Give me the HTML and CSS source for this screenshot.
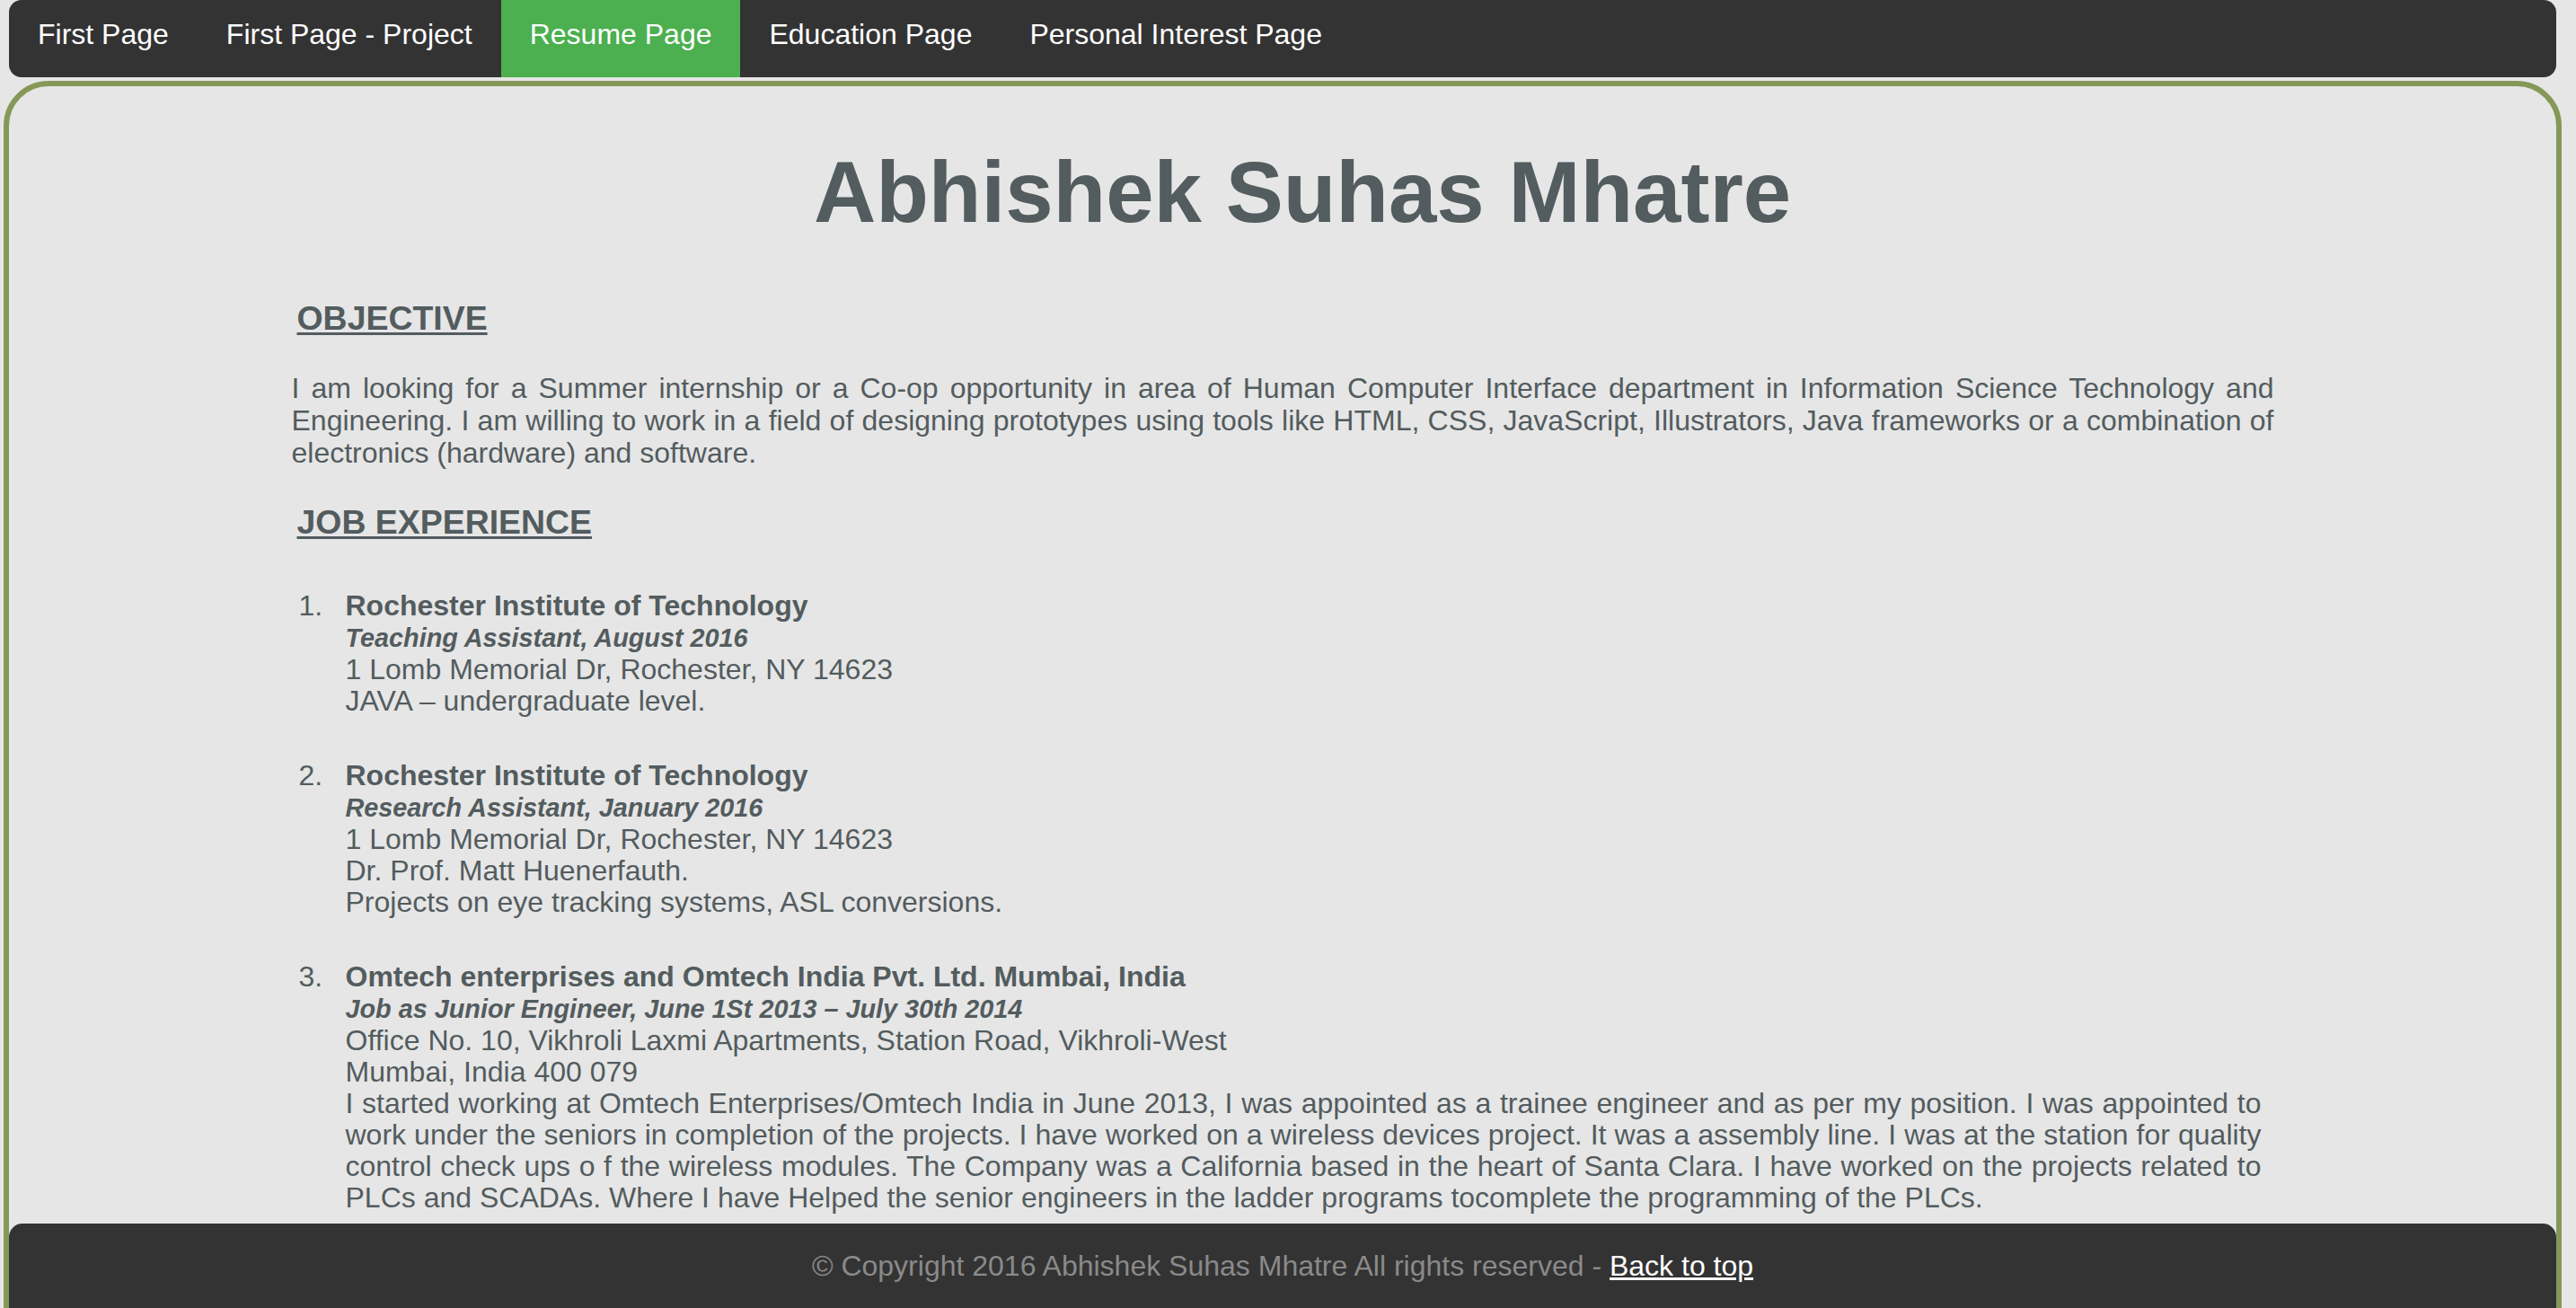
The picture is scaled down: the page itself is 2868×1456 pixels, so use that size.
FILE: index.html
```html
<!DOCTYPE html>
<html lang="en">
<head>
<meta charset="utf-8">
<title>Resume - Abhishek Suhas Mhatre</title>
<link rel="stylesheet" href="styles.css">
</head>
<body>
<div class="page" id="top">
  <nav class="topnav">
    <ul class="nav-list">
      <li><a class="nav-link" href="#">First Page</a></li>
      <li><a class="nav-link" href="#">First Page - Project</a></li>
      <li><a class="nav-link active" href="#">Resume Page</a></li>
      <li><a class="nav-link" href="#">Education Page</a></li>
      <li><a class="nav-link" href="#">Personal Interest Page</a></li>
    </ul>
  </nav>
  <main class="sheet">
    <div class="column">
      <h1 class="name">Abhishek Suhas Mhatre</h1>
      <h3 class="section">OBJECTIVE</h3>
      <p class="objective">I am looking for a Summer internship or a Co-op opportunity in area of Human Computer Interface department in Information Science Technology and Engineering. I am willing to work in a field of designing prototypes using tools like HTML, CSS, JavaScript, Illustrators, Java frameworks or a combination of electronics (hardware) and software.</p>
      <h3 class="section">JOB EXPERIENCE</h3>
      <ol class="jobs">
        <li class="job">
          <div class="job-body">
            <span class="job-title">Rochester Institute of Technology</span><br>
            <span class="job-role">Teaching Assistant, August 2016</span><br>
            1 Lomb Memorial Dr, Rochester, NY 14623<br>
            JAVA – undergraduate level.
          </div>
        </li>
        <li class="job">
          <div class="job-body">
            <span class="job-title">Rochester Institute of Technology</span><br>
            <span class="job-role">Research Assistant, January 2016</span><br>
            1 Lomb Memorial Dr, Rochester, NY 14623<br>
            Dr. Prof. Matt Huenerfauth.<br>
            Projects on eye tracking systems, ASL conversions.
          </div>
        </li>
        <li class="job">
          <div class="job-body">
            <span class="job-title">Omtech enterprises and Omtech India Pvt. Ltd. Mumbai, India</span><br>
            <span class="job-role">Job as Junior Engineer, June 1St 2013 – July 30th 2014</span><br>
            Office No. 10, Vikhroli Laxmi Apartments, Station Road, Vikhroli-West<br>
            Mumbai, India 400 079<br>
            I started working at Omtech Enterprises/Omtech India in June 2013, I was appointed as a trainee engineer and as per my position. I was appointed to work under the seniors in completion of the projects. I have worked on a wireless devices project. It was a assembly line. I was at the station for quality control check ups o f the wireless modules. The Company was a California based in the heart of Santa Clara. I have worked on the projects related to PLCs and SCADAs. Where I have Helped the senior engineers in the ladder programs tocomplete the programming of the PLCs.
          </div>
        </li>
      </ol>
    </div>
    <footer class="footer">
      © Copyright 2016 Abhishek Suhas Mhatre All rights reserved - <a class="footer-link" href="#top">Back to top</a>
    </footer>
  </main>
</div>
</body>
</html>
```

FILE: styles.css
```css
html, body {
  margin: 0;
  padding: 0;
  background: #e6e6e6;
}

body {
  font-family: "Liberation Sans", Arial, Helvetica, sans-serif;
  font-size: 32px;
  color: #535c5e;
}

.page {
  width: 2848px;
  padding-left: 4px;
}

/* ---------- top navigation ---------- */
.topnav {
  margin: 0 6px 4px 6px;
  background: #333333;
  border-radius: 14px;
  overflow: hidden;
}

.nav-list {
  list-style: none;
  margin: 0;
  padding: 0;
  display: flex;
}

.nav-link {
  display: block;
  padding: 20px 32px 29px 32px;
  line-height: 37px;
  color: #ffffff;
  text-decoration: none;
  white-space: nowrap;
}

.nav-link.active {
  background: #4caf50;
}

/* ---------- main sheet ---------- */
.sheet {
  border: 6px solid #869858;
  border-radius: 50px;
  background: #e6e6e6;
  padding-bottom: 40px;
}

.column {
  width: 2207px;
  margin: 0 auto;
}

.name {
  margin: 63px 0 64px 0;
  padding-left: 44px;
  font-size: 96px;
  line-height: 110px;
  font-weight: bold;
  text-align: center;
}

.section {
  margin: 38px 0;
  padding-left: 6px;
  font-size: 37.44px;
  line-height: 42px;
  font-weight: bold;
  text-decoration: underline;
  text-decoration-thickness: 3px;
  text-underline-offset: 3px;
}

.objective {
  margin: 0;
  padding-top: 1px;
  line-height: 36px;
  text-align: justify;
}

/* ---------- job list ---------- */
.jobs {
  list-style: none;
  counter-reset: job;
  margin: 55px 14px 0 0;
  padding: 0 0 0 8px;
}

.job {
  counter-increment: job;
  display: grid;
  grid-template-columns: 52px 1fr;
  margin-bottom: 48px;
  line-height: 35px;
}

.job:last-child {
  margin-bottom: 0;
}

.job::before {
  content: counter(job) ".";
}

.job-body {
  text-align: justify;
}

.job-title {
  font-weight: bold;
}

.job-role {
  font-weight: bold;
  font-style: italic;
  font-size: 28.8px;
}

/* ---------- footer ---------- */
.footer {
  margin-top: 11px;
  padding: 29px 0 48px 0;
  background: #333333;
  border-radius: 15px;
  color: #8a8a8a;
  text-align: center;
  line-height: 37px;
}

.footer-link {
  color: #ffffff;
  text-decoration: underline;
}
```
